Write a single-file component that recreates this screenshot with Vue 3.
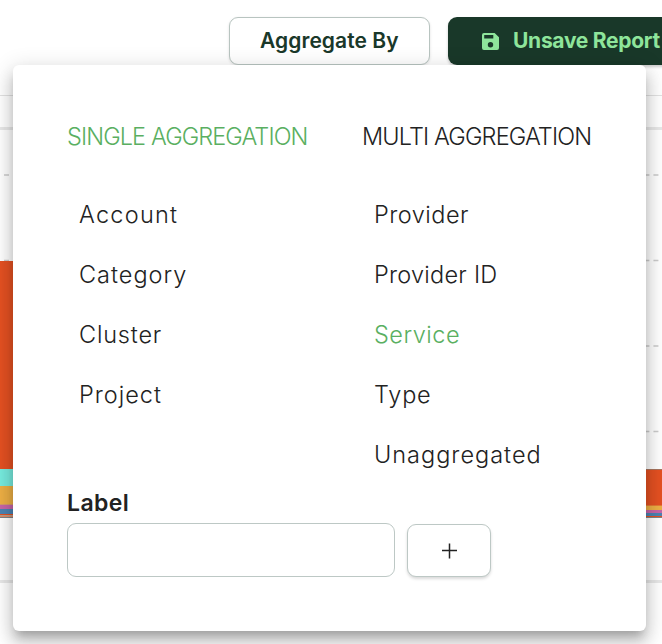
<script setup>
const gridLines = [175, 260.5, 346, 431.5]

const leftBar = [
  { y: 261, h: 208, fill: '#e55122' },
  { y: 469, h: 17, fill: '#77ecdf' },
  { y: 486, h: 18, fill: '#eeb045' },
  { y: 504, h: 1, fill: '#d99a6c' },
  { y: 505, h: 4, fill: '#c766a8' },
  { y: 509, h: 5, fill: '#4c84b3' },
  { y: 514, h: 1, fill: '#e55122' },
  { y: 515, h: 1, fill: '#b3a08c' },
  { y: 516, h: 1, fill: '#e08a68' },
  { y: 517, h: 1, fill: '#7d8587' }
]

const rightBar = [
  { y: 469, h: 1, fill: '#a8755f' },
  { y: 470, h: 35, fill: '#e55122' },
  { y: 505, h: 1, fill: '#e57a33' },
  { y: 506, h: 4, fill: '#eeb045' },
  { y: 510, h: 3, fill: '#c766a8' },
  { y: 513, h: 3, fill: '#4c84b3' },
  { y: 516, h: 1, fill: '#e55122' },
  { y: 517, h: 1, fill: '#7d8587' }
]

const columns = [
  {
    key: 'single',
    title: 'SINGLE AGGREGATION',
    active: true,
    items: [
      { name: 'Account', spacing: 'wider' },
      { name: 'Category', spacing: 'wide' },
      { name: 'Cluster', spacing: 'medium' },
      { name: 'Project', spacing: 'wide' }
    ]
  },
  {
    key: 'multi',
    title: 'MULTI AGGREGATION',
    active: false,
    items: [
      { name: 'Provider', spacing: 'snug' },
      { name: 'Provider ID', spacing: 'tight' },
      { name: 'Service', spacing: 'snug', active: true },
      { name: 'Type', spacing: 'medium' },
      { name: 'Unaggregated', spacing: 'wide' }
    ]
  }
]
</script>

<template>
  <div class="page">
    <svg class="chart" width="662" height="644" viewBox="0 0 662 644" aria-hidden="true">
      <rect x="0" y="95" width="662" height="1" fill="#e2e2e2" />
      <rect x="0" y="127" width="662" height="3" fill="#e8e8e8" />
      <line
        v-for="y in gridLines"
        :key="y"
        x1="4"
        :y1="y"
        x2="662"
        :y2="y"
        stroke="#cccccc"
        stroke-width="1.5"
        stroke-dasharray="5 4.02"
      />
      <rect v-for="s in leftBar" :key="'l' + s.y" x="0" :y="s.y" width="40" :height="s.h" :fill="s.fill" />
      <rect v-for="s in rightBar" :key="'r' + s.y" x="600" :y="s.y" width="62" :height="s.h" :fill="s.fill" />
      <rect x="0" y="580" width="662" height="3" fill="#e8e8e8" />
    </svg>

    <header class="toolbar">
      <button class="btn outline"><span class="aggregate">Aggregate By</span></button>
      <button class="btn solid">
        <svg class="save" width="17" height="17" viewBox="0 0 17 17">
          <path
            fill="currentColor"
            fill-rule="evenodd"
            d="M2 0H12.6L17 4.2V15a2 2 0 0 1-2 2H2a2 2 0 0 1-2-2V2A2 2 0 0 1 2 0ZM2.2 2.1V5.6H11.3V2.1ZM8.5 9.1a2.7 2.7 0 1 0 0 5.4 2.7 2.7 0 0 0 0-5.4Z"
          />
        </svg>
        <span class="unsave">Unsave Report</span>
      </button>
    </header>

    <section class="panel">
      <div class="columns">
        <div v-for="col in columns" :key="col.key" class="column" :class="col.key">
          <h2 class="title" :class="{ active: col.active }"><span>{{ col.title }}</span></h2>
          <ul class="list">
            <li v-for="item in col.items" :key="item.name" :class="[item.spacing, { active: item.active }]">
              <span>{{ item.name }}</span>
            </li>
          </ul>
        </div>
      </div>
      <label class="label" for="label-input"><span>Label</span></label>
      <div class="row">
        <input id="label-input" class="field" type="text" />
        <button class="add" aria-label="Add">
          <svg width="16" height="16" viewBox="0 0 16 16">
            <path d="M8.5 .5V15.5M1 7.5H16" stroke="#222" stroke-width="1.5" fill="none" />
          </svg>
        </button>
      </div>
    </section>
  </div>
</template>

<style>
body {
  margin: 0;
  overflow: hidden;
}
</style>

<style scoped>
.page {
  position: relative;
  width: 662px;
  height: 644px;
  overflow: hidden;
  background: #fff;
  color: #222;
  font-family: Inter, "Liberation Sans", sans-serif;
}

.chart {
  position: absolute;
  inset: 0;
}

.toolbar {
  position: relative;
  display: flex;
  gap: 18px;
  padding: 17px 0 0 229px;
}

.btn {
  box-sizing: border-box;
  height: 48px;
  flex: none;
  display: flex;
  align-items: center;
  border-radius: 9px;
  font: 600 21px/28px Inter, sans-serif;
  white-space: nowrap;
}

.outline {
  width: 201px;
  padding: 0 0 0 30px;
  border: 1px solid #b8c4c0;
  background: #fff;
  color: #1a382a;
  box-shadow: 0 1px 3px rgba(0, 0, 0, 0.12);
}

.solid {
  width: 246px;
  gap: 14px;
  padding: 0 0 0 34px;
  border: 0;
  background: #193829;
  color: #8ee59b;
  box-shadow: 0 2px 3px rgba(0, 0, 0, 0.2);
}

.save {
  margin-top: 1px;
}

.aggregate {
  letter-spacing: 0.07px;
}

.unsave {
  font-weight: 700;
  letter-spacing: -0.28px;
}

.panel {
  position: absolute;
  left: 13px;
  top: 65px;
  width: 633px;
  height: 566px;
  box-sizing: border-box;
  padding: 54px 54px 0;
  border-radius: 6px;
  background: #fff;
  box-shadow:
    0 8px 8px -4px rgba(0, 0, 0, 0.2),
    0 12px 15px 1.5px rgba(0, 0, 0, 0.14),
    0 4px 21px 3px rgba(0, 0, 0, 0.12);
}

.columns {
  display: grid;
  grid-template-columns: 295px 1fr;
  height: 366px;
}

.title {
  margin: 0;
  font-size: 23.5px;
  line-height: 36px;
  font-weight: 300;
  white-space: nowrap;
  letter-spacing: -0.85px;
}

.single .title {
  letter-spacing: -0.9px;
}

.list {
  list-style: none;
  margin: 0;
  padding: 30px 0 0 12px;
}

.list li {
  height: 60px;
  font-size: 23.5px;
  line-height: 60px;
  font-weight: 300;
  white-space: nowrap;
}

.list .tight {
  letter-spacing: 0.25px;
}

.list .snug {
  letter-spacing: 0.5px;
}

.list .medium {
  letter-spacing: 0.8px;
}

.list .wide {
  letter-spacing: 1px;
}

.list .wider {
  letter-spacing: 1.25px;
}

.active {
  color: #5aaf61;
}

.label {
  display: block;
  height: 38px;
  font-size: 23px;
  line-height: 36px;
  font-weight: 600;
  letter-spacing: 0.4px;
}

.row {
  display: flex;
  align-items: flex-end;
  gap: 12px;
}

.field {
  box-sizing: border-box;
  width: 328px;
  height: 54px;
  padding: 0 16px;
  border: 1px solid #bdc8c5;
  border-radius: 9px;
  background: #fff;
  font: inherit;
}

.add {
  box-sizing: border-box;
  width: 84px;
  height: 53px;
  padding: 0;
  display: flex;
  align-items: center;
  justify-content: center;
  border: 1px solid #bdc8c5;
  border-radius: 9px;
  background: #fff;
  box-shadow: 0 2px 3px rgba(0, 0, 0, 0.15);
}
</style>
